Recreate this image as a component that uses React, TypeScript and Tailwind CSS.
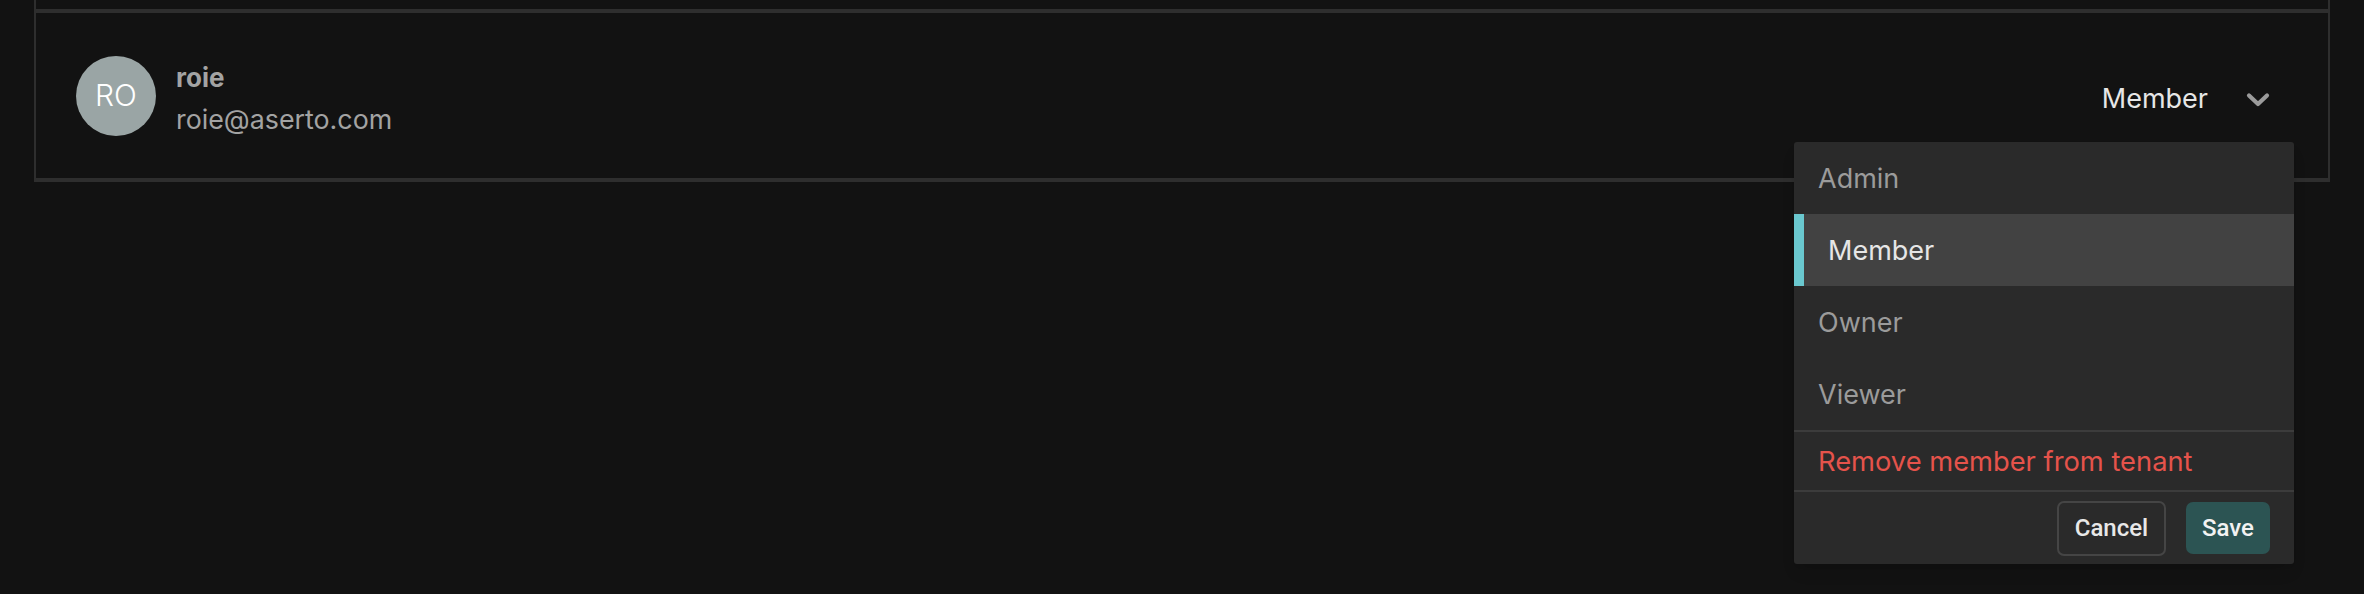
const ROLES = ["Admin", "Member", "Owner", "Viewer"];

function Chevron() {
  return (
    <svg width="24" height="16" viewBox="0 0 24 16" fill="none" className="text-[#9b9b9b]">
      <path d="M3 3.5 L12 12 L21 3.5" stroke="currentColor" strokeWidth="4.2" strokeLinecap="round" strokeLinejoin="round" />
    </svg>
  );
}

export default function App() {
  const selected = "Member";

  return (
    <div className="min-h-screen w-full bg-[#121212] px-[34px] font-['Inter','Noto_Sans',sans-serif]">
      {/* previous row edge */}
      <div className="h-[11px] border-x-2 border-b-2 border-[#2e2e2e]" />

      {/* member row */}
      <div className="relative flex h-[171px] items-center justify-between border-x-2 border-b-4 border-t-2 border-[#2e2e2e] pl-[40px] pr-[58px]">
        <div className="flex items-center gap-[20px]">
          <div className="flex h-[80px] w-[80px] items-center justify-center rounded-full bg-[#9aa5a5] text-[30px] font-light text-white">
            RO
          </div>
          <div className="flex flex-col pt-[6px]">
            <span className="text-[26px] font-bold leading-[36px] text-[#a3a3a3]">roie</span>
            <span className="mt-[5px] text-[26.8px] leading-[36px] text-[#a3a3a3]">roie@aserto.com</span>
          </div>
        </div>

        <div className="flex items-center gap-[38px] pt-[8px]">
          <span className="text-[27px] text-[#e6e6e6]">Member</span>
          <Chevron />
        </div>

        {/* role menu */}
        <div className="absolute right-[34px] top-[129px] z-10 w-[500px] rounded-[3px] bg-[#2a2a2a] shadow-lg">
          {ROLES.map((role) =>
            role === selected ? (
              <div
                key={role}
                className="flex h-[72px] items-center border-l-[10px] border-[#6ac8cf] bg-[#424242] pl-[24px] pt-[3px] text-[27px] text-[#e6e6e6]"
              >
                {role}
              </div>
            ) : (
              <div key={role} className="flex h-[72px] items-center pl-[24px] pt-[3px] text-[27px] text-[#9b9b9b]">
                {role}
              </div>
            )
          )}
          <div className="flex h-[62px] items-center border-y-2 border-[#3c3c3c] pl-[24px] pt-[2px] text-[27.3px] text-[#e5534b]">
            Remove member from tenant
          </div>
          <div className="flex h-[72px] items-center justify-end gap-[20px] pr-[24px] font-['Roboto',sans-serif]">
            <button className="h-[55px] w-[109px] rounded-[7px] border-2 border-[#454545] text-[24px] font-medium text-[#e8e8e8]">
              Cancel
            </button>
            <button className="h-[52px] w-[84px] rounded-[7px] bg-[#2c5453] text-[24px] font-medium text-[#f2f2f2]">
              Save
            </button>
          </div>
        </div>
      </div>
    </div>
  );
}
